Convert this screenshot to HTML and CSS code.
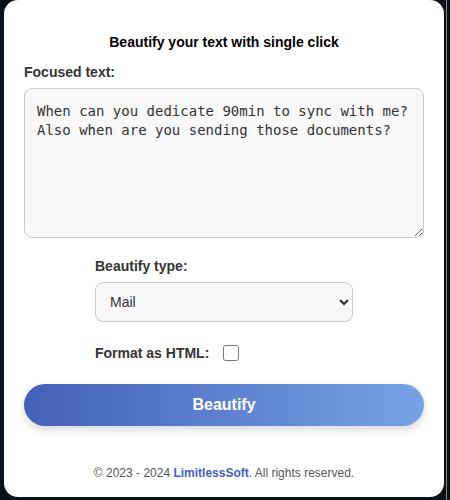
FILE: index.html
```html
<!DOCTYPE html>
<html>
<head>
<meta charset="utf-8">
<link rel="stylesheet" href="styles.css">
</head>
<body>
<div class="card">
  <h1 class="title">Beautify your text with single click</h1>
  <label class="label" for="src">Focused text:</label>
  <textarea id="src" class="textarea">When can you dedicate 90min to sync with me?
Also when are you sending those documents?</textarea>
  <div class="options">
    <label class="label" for="type">Beautify type:</label>
    <select id="type" class="select"><option>Mail</option></select>
    <div class="check-row">
      <label class="label" for="html">Format as HTML:</label>
      <input id="html" type="checkbox" class="checkbox">
    </div>
  </div>
  <button class="btn">Beautify</button>
  <p class="footer">© 2023 - 2024 <a class="link">LimitlessSoft</a>. All rights reserved.</p>
</div>
</body>
</html>
```
FILE: styles.css
```css
html, body { margin: 0; padding: 0; }
body {
  background: linear-gradient(90deg, #0d1117 0, #0d1117 446px, #8c8a78 446px, #8c8a78 447px, #0d1117 447px);
  font-family: "Liberation Sans", Arial, sans-serif;
  width: 450px;
  height: 500px;
  overflow: hidden;
}
.card {
  box-sizing: border-box;
  margin-left: 4px;
  width: 440px;
  height: 497px;
  background: #fff;
  border-radius: 14px;
  padding: 34px 20px 0 20px;
  display: flex;
  flex-direction: column;
}
.title {
  margin: 0;
  font-size: 14px;
  font-weight: bold;
  color: #000;
  text-align: center;
  line-height: 16px;
}
.label {
  font-size: 14px;
  font-weight: bold;
  color: #333;
  line-height: 16px;
}
.card > .label { margin-top: 14px; }
.textarea {
  box-sizing: border-box;
  margin-top: 8px;
  width: 400px;
  height: 150px;
  border: 1px solid #ccc;
  border-radius: 8px;
  background: #f8f8f8;
  padding: 13px 12px;
  font-family: "DejaVu Sans Mono", monospace;
  font-size: 14px;
  line-height: 19px;
  color: #333;
  resize: vertical;
}
.options {
  align-self: center;
  width: 258px;
  display: flex;
  flex-direction: column;
  margin-top: 20px;
}
.select {
  box-sizing: border-box;
  margin-top: 8px;
  width: 258px;
  height: 40px;
  border: 1px solid #ccc;
  border-radius: 8px;
  background: #f8f8f8;
  padding: 0 10px;
  font-family: "Liberation Sans", Arial, sans-serif;
  font-size: 14px;
  color: #333;
}
.check-row {
  display: flex;
  align-items: center;
  margin-top: 23px;
  gap: 14px;
}
.checkbox {
  margin: 0;
  width: 16px;
  height: 16px;
}
.btn {
  margin-top: 23px;
  height: 42px;
  width: 400px;
  border: none;
  border-radius: 21px;
  background: linear-gradient(90deg, #4361b8, #78a1e6);
  color: #fff;
  font-family: "Liberation Sans", Arial, sans-serif;
  font-size: 16px;
  font-weight: bold;
  box-shadow: 0 4px 8px rgba(0,0,0,0.15);
}
.footer {
  margin: 40px 0 0;
  text-align: center;
  font-size: 12px;
  color: #555;
  line-height: 14px;
}
.link {
  color: #3f5fc0;
  font-weight: bold;
}
```
